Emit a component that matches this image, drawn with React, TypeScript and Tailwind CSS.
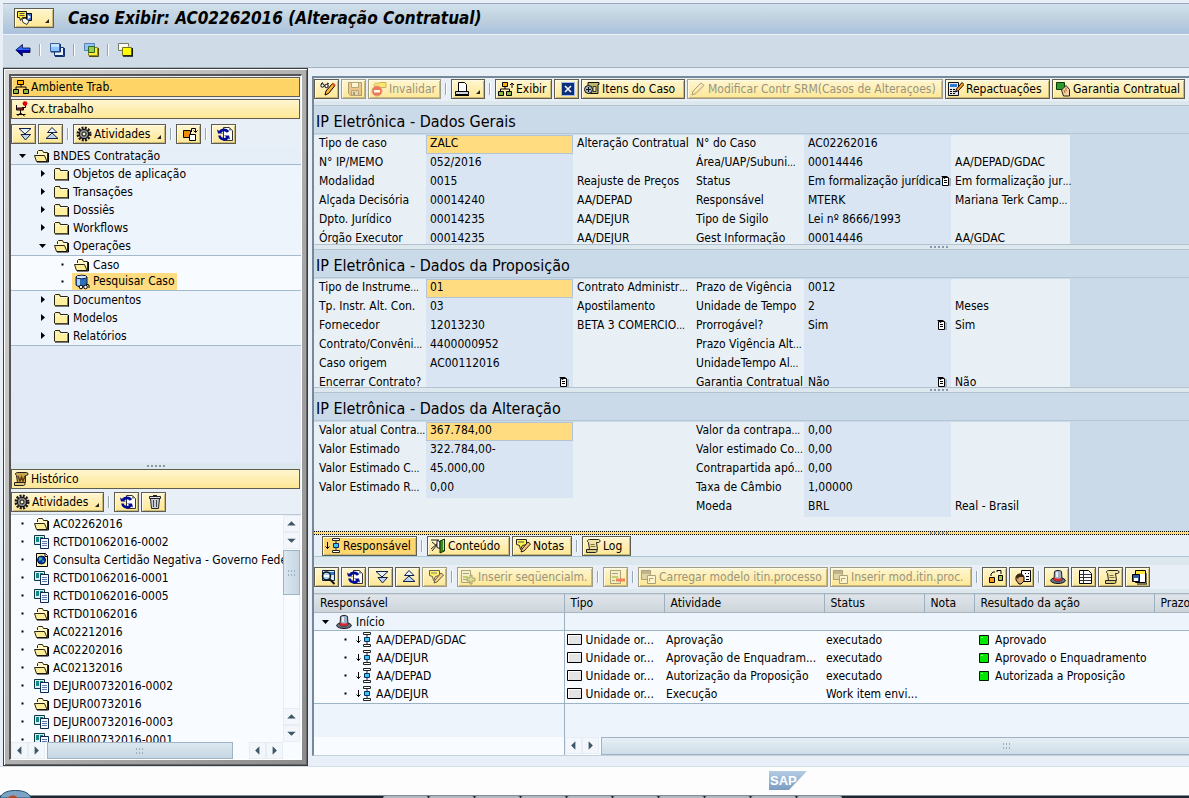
import { ReactNode } from 'react';
import clsx from 'clsx';

const icons: Record<string, ReactNode> = {
  back: (
    <>
      <path d="M1 8L7 2.500V6h8v2z" fill="#2a6cff" />
      <path d="M1 8h14v2.500H7V14z" fill="#0000a8" />
      <path d="M.8 8L7.500 2.500V6H15v4.500H7.500V14z" stroke="#00003c" strokeWidth=".8" />
    </>
  ),
  newWindow: (
    <>
      <path d="M5.500 5.500h9v8h-9z" fill="#e8f0fa" stroke="#14306e" />
      <path d="M6 14.500h9.500V6" stroke="#14306e" />
      <path d="M1.500 1.500h9v8h-9z" fill="#8cc4ff" stroke="#3a5f9c" />
      <path d="M2 2h8v3H2z" fill="#c4e2ff" />
      <path d="M2 10h9.500V2" stroke="#14306e" />
    </>
  ),
  overlapGreen: (
    <>
      <path d="M1.500 1.500h10v7h-10z" fill="#8cc4ff" stroke="#5b7fae" />
      <path d="M5.500 5.500h9v8h-9z" fill="#ffee3c" stroke="#8a8530" />
      <path d="M6 14.500h9.500V6" stroke="#4d4a12" />
      <path d="M5.500 4.500h6v6h-6z" fill="#9ad04a" stroke="#33651b" />
    </>
  ),
  overlapYellow: (
    <>
      <path d="M1.500 8.500v-7h10v3" fill="#fbfbf0" stroke="#77786a" />
      <path d="M1.500 8.500h4" stroke="#77786a" />
      <path d="M5.500 5.500h9v8h-9z" fill="#ffff00" stroke="#77731a" />
      <path d="M6 14h9.500V6" stroke="#111" strokeWidth="1.400" />
    </>
  ),
  session: (
    <>
      <path d="M.5 1.500h9v6h-4l-2 3-1-3h-2z" fill="#ffe83c" stroke="#222" />
      <path d="M2.500 3.500h5M2.500 5.500h5" stroke="#555" />
      <path d="M9.500 3.500h5v7h-5z" fill="#2f6fd0" stroke="#000" />
      <path d="M11 5l3 2-3 2z" fill="#fff" />
      <path d="M5 9l3-1 4 3-2 3.500-4-2z" fill="#fff" stroke="#333" />
    </>
  ),
  org: (
    <>
      <path d="M8 5v3M3 11V8h10v3" stroke="#000" />
      <path d="M4.500 1.500h6v4h-6z" fill="#ffae00" stroke="#000" />
      <path d="M.5 10.500h5v4h-5zM10.500 10.500h5v4h-5z" fill="#8bb83d" stroke="#000" />
    </>
  ),
  chair: (
    <>
      <path d="M3.500 4v5h7v-2h-6" fill="#d8282c" stroke="#000" />
      <path d="M7.500 9v4M3.500 13.500h9M4.500 15l3-3 4 3" stroke="#000" />
      <path d="M9 6.500h3.500V4" stroke="#000" />
      <circle cx="12" cy="2.600" r="2.400" fill="#e00000" />
    </>
  ),
  down2: (
    <>
      <path d="M2 2.500h12L8 8z" fill="#e9f1fb" stroke="#10204a" />
      <path d="M4 8.500h9.500L8.500 14z" fill="#bcd4ee" stroke="#10204a" />
    </>
  ),
  up2: (
    <>
      <path d="M8 1.500l5 5H3.500z" fill="#e9f1fb" stroke="#10204a" />
      <path d="M8 7l6 5.500H2z" fill="#bcd4ee" stroke="#10204a" />
    </>
  ),
  gear: (
    <>
      <circle cx="8" cy="8" r="6.200" stroke="#1c1c1c" strokeWidth="2.600" strokeDasharray="2 1.250" />
      <circle cx="8" cy="8" r="4.700" fill="#8c8c8c" stroke="#111" strokeWidth="1.200" />
      <circle cx="8" cy="8" r="2" fill="#fff6cc" stroke="#111" />
    </>
  ),
  swap: (
    <>
      <path d="M1.500 4.500h7v7h-7z" fill="#f08a00" stroke="#000" />
      <path d="M7.500 8.500h6v6h-6z" fill="#fff" stroke="#000" />
      <path d="M9.500 6V2.500h4V6M11.500 4.500l2 2 2-2" stroke="#000" />
    </>
  ),
  refresh: (
    <>
      <path d="M6.500 1.500h6l3 3v10h-9z" fill="#fff" stroke="#333" />
      <path d="M12 1l3.500 3.500H12z" fill="#888" />
      <path d="M11 6A4.500 4 0 0 0 3 6M2.500 9.500a4.500 4 0 0 0 8.500 1.500" stroke="#000b96" strokeWidth="2.600" />
      <path d="M0 3.500l6 4H1zM13 13.500l-6-4h5z" fill="#000b96" />
    </>
  ),
  trash: (
    <>
      <path d="M3.500 4.500h9l-1 10h-7z" fill="#c9cfd6" stroke="#222" />
      <path d="M6.500 6v7M9.500 6v7" stroke="#444" />
      <path d="M2.500 2.500h11v2h-11z" fill="#e6eaee" stroke="#222" />
      <path d="M6 1.500h4" stroke="#222" />
    </>
  ),
  folder: (
    <>
      <path d="M.5 13.500v-10l1-1h4l1 2h7v9z" fill="#fff0a0" stroke="#8a8052" />
      <path d="M.5 13V3.500l1-1h4l1 2h7" stroke="#2a2611" />
      <path d="M1.500 5.500h12" stroke="#fffbe0" />
      <path d="M14.500 5v9.500M1 14h14" stroke="#000" />
    </>
  ),
  openFolder: (
    <>
      <path d="M3.500 6V3.500l1-1h4l1 2h4v9" fill="#fff7c4" stroke="#2a2611" />
      <path d="M.5 7.500h10l2.500 6H2.500z" fill="#ffee98" stroke="#2a2611" />
      <path d="M14.500 5v9H3" stroke="#000" />
    </>
  ),
  search: (
    <>
      <path d="M2 3v8c2 2.500 9 2.500 11 0V3" fill="#2f6fb8" stroke="#10204a" />
      <path d="M3 4v7l3 1V4z" fill="#a8d4ff" />
      <ellipse cx="7.500" cy="3" rx="5.500" ry="1.800" fill="#cfe6fb" stroke="#10204a" />
      <circle cx="7" cy="13" r="1.800" fill="#fff" stroke="#000" />
      <circle cx="11.500" cy="13" r="1.800" fill="#fff" stroke="#000" />
      <path d="M12 10l3 1v3" stroke="#000" />
    </>
  ),
  docs: (
    <>
      <path d="M.5 1.500h10v9H.5z" fill="#d5f0ee" stroke="#0c3640" />
      <path d="M2 3h3v5H2zM6 3h3v2H6z" fill="#138a8a" />
      <path d="M6.500 4.500h8v10h-8z" fill="#f4f8ff" stroke="#0e2752" />
      <path d="M8 7.500h5M8 9.500h5M8 11.500h5" stroke="#5878a8" />
    </>
  ),
  web: (
    <>
      <path d="M2.500 1.500h9l2 2v11h-11z" fill="#fff3b0" stroke="#000" />
      <path d="M11 1.500v3h3" fill="#fff" stroke="#000" />
      <circle cx="7.500" cy="8" r="4" fill="#0b2fae" stroke="#001040" />
      <path d="M5.500 5l3 1-1 2-3 1zM8.500 8l2 1-2 2z" fill="#33c7a0" />
    </>
  ),
  scroll: (
    <>
      <path d="M3.500 4.500c-2-1-1-3 1-3h9c2 0 2 3 0 3h-2l1 7h-8z" fill="#f1e4a4" stroke="#222" />
      <path d="M1.500 11.500h9c2 0 2 3 0 3h-9z" fill="#dccb7d" stroke="#222" />
      <path d="M5.500 6.500h4M5.500 8.500h5" stroke="#7d7136" />
    </>
  ),
  history: (
    <>
      <path d="M3.500 4.500c-2-1-1-3 1-3h9c2 0 2 3 0 3h-1v7h-8z" fill="#c9a44c" stroke="#222" />
      <path d="M1.500 11.500h9c2 0 2 3 0 3h-9z" fill="#e2c878" stroke="#222" />
      <path d="M5 5l2 5 1.500-4L10 10l2-5" stroke="#5b3b12" strokeWidth="1.400" />
    </>
  ),
  pencilGlasses: (
    <>
      <path d="M1 3l2-1.500M7 2l2 1" stroke="#000" />
      <circle cx="2.500" cy="4.500" r="1.700" fill="#fff" stroke="#000" />
      <circle cx="6.500" cy="5" r="1.700" fill="#fff" stroke="#000" />
      <path d="M5 14l1-4 6.500-7.500 2.500 2L8.500 12.500z" fill="#ffb733" stroke="#000" />
      <path d="M11.500 3.500l2.500 2 1.500-2L13 1.500z" fill="#e35b20" />
    </>
  ),
  save: (
    <>
      <path d="M1.500 1.500h13v13h-11l-2-2z" fill="#e8b574" stroke="#8a7a5c" />
      <path d="M4.500 1.500h7v5h-7z" fill="#fff4d5" stroke="#9a8562" />
      <path d="M4.500 9.500h7v5h-7z" fill="#d9cdb0" stroke="#9a8562" />
      <path d="M6 11h2v3H6z" fill="#8a7a5c" />
    </>
  ),
  invalidate: (
    <>
      <path d="M3 3.500c2-3 4 0 6-2h6v5H4z" fill="#ffe14a" stroke="#b59a3a" />
      <circle cx="6" cy="10" r="5" fill="#e8462f" stroke="#c98377" />
      <path d="M3 9h6v2.500H3z" fill="#fff" />
    </>
  ),
  print: (
    <>
      <path d="M4.500 1.500h6l2 2v7h-8z" fill="#fff" stroke="#000" />
      <path d="M1.500 10.500h13v3h-13z" fill="#cfd6de" stroke="#000" />
      <path d="M1 14h14v1H1z" fill="#000" />
    </>
  ),
  close: (
    <>
      <path d="M1 1h14v14H1z" fill="#a6b8ea" />
      <path d="M2 2h12v12H2z" fill="#0c2f7c" />
      <path d="M5 5l6 6M11 5l-6 6" stroke="#fff" strokeWidth="1.500" />
    </>
  ),
  orgUp: (
    <>
      <path d="M7 6v2M2.500 10V8h9v2M14 7V2M12 4l2-2 2 2" stroke="#000" />
      <path d="M4.500 1.500h5v4h-5z" fill="#ffae00" stroke="#000" />
      <path d="M.5 10.500h5v4h-5zM8.500 10.500h5v4h-5z" fill="#8bb83d" stroke="#000" />
    </>
  ),
  items: (
    <>
      <path d="M4 1.500h11v2h-1v9H4z" fill="#bdb76a" stroke="#111" />
      <path d="M9 5.500h3v5H9z" fill="#ece7a8" stroke="#333" />
      <circle cx="4.500" cy="8.500" r="4" fill="#9fb1c4" stroke="#111" />
      <path d="M2 8.500h5M4.500 6v5" stroke="#111" />
    </>
  ),
  pencil: (
    <>
      <path d="M2 14l1-4 8-8 3 2.500-8 8z" fill="#f3dca0" stroke="#8d8468" />
      <path d="M5 10l7-7" stroke="#fffbe8" />
    </>
  ),
  calc: (
    <>
      <path d="M.5 1.500h10v13H.5z" fill="#e6e6e6" stroke="#111" />
      <path d="M2 3h7v3H2z" fill="#2a7bd6" />
      <path d="M2 8h2v1H2zM5 8h2v1H5zM2 10h2v1H2zM5 10h2v1H5zM2 12h2v1H2zM5 12h2v1H5z" fill="#000" />
      <path d="M7.500 11l1-3 5.500-6.500 2 2-5.500 6z" fill="#ff9a1f" stroke="#111" />
    </>
  ),
  hand: (
    <>
      <path d="M1.500 1.500h8v7h-8z" fill="#2c9a2c" stroke="#0a3c0a" />
      <path d="M6.500 9L11 4.500l3.500 4v6.500h-6z" fill="#f6cfa2" stroke="#222" />
      <path d="M11 6.500v4M9 9l1 3" stroke="#a87443" />
    </>
  ),
  agent: (
    <>
      <path d="M2.500 4v7M.5 8.500l2 2 2-2" stroke="#000" />
      <path d="M7.500.5h7v2h-7zM7.500 12.500h7v2h-7z" fill="#fff" stroke="#222" />
      <path d="M11 3v9" stroke="#222" />
      <path d="M8.500 5.500h5v4h-5z" fill="#35c8f0" stroke="#0a2c66" />
    </>
  ),
  content: (
    <>
      <path d="M1 2h8M2 13l5-6M2 4l6 5M1 11l7-6" stroke="#222" />
      <path d="M7 2.500l3 1v7l-3-1z" fill="#fff" stroke="#222" />
      <path d="M10 3l4.500-2v12L10 15z" fill="#3a8c1e" stroke="#102e08" />
      <path d="M13.500 2v10" stroke="#e0d65a" />
    </>
  ),
  note: (
    <>
      <path d="M1.500 1.500h10v5l-4 1-2 4-1-4-3-1z" fill="#fff04a" stroke="#222" />
      <path d="M3 4h6" stroke="#555" />
      <path d="M6 14l1-3 6-7 2.500 2-6.500 7z" fill="#ffc37a" stroke="#222" />
    </>
  ),
  find: (
    <>
      <path d="M2.500 1.500h12v10h-12z" fill="#d8ecfb" stroke="#123" />
      <path d="M3 3h11v3H3z" fill="#2a7bd6" />
      <circle cx="6.500" cy="7" r="4" fill="#9fd0f8" stroke="#111" strokeWidth="1.500" />
      <path d="M9.500 10l5 5" stroke="#111" strokeWidth="2" />
      <path d="M4 7h5" stroke="#fff" strokeWidth="2" />
    </>
  ),
  insert: (
    <>
      <path d="M1.500 1.500h9v12h-9z" fill="#f3eecb" stroke="#878263" />
      <path d="M3 4.500h6M3 10.500h4" stroke="#878263" />
      <path d="M3 7h5v2H3z" fill="#a8c34c" />
      <path d="M10 6h2v3h3v3h-3v3h-2v-3H7V9h3z" fill="#cfe07c" stroke="#878263" />
    </>
  ),
  remove: (
    <>
      <path d="M1.500 1.500h10v13h-10z" fill="#f3eecb" stroke="#878263" />
      <path d="M3 4.500h6M3 11.500h3" stroke="#878263" />
      <path d="M3 7h6v2H3z" fill="#a8c34c" />
      <path d="M7 9.500h9v3H7z" fill="#ef5638" />
    </>
  ),
  template: (
    <>
      <path d="M.5 1.500h9v9h-9z" fill="#d3ca9c" stroke="#878263" />
      <path d="M1 2h8v3H1z" fill="#a59c72" />
      <path d="M6.500 6.500h8v8h-8z" fill="#fff8db" stroke="#878263" />
      <path d="M8.500 12.500v-3h4" stroke="#878263" />
    </>
  ),
  link: (
    <>
      <path d="M3 7V5l2-2h2M9 3V1.500h4V5" stroke="#000" />
      <path d="M1.500 8.500h5v5h-5z" fill="#ff9a1f" stroke="#000" />
      <path d="M10.500 6.500h4v5h-4z" fill="#a5c64b" stroke="#000" />
    </>
  ),
  people: (
    <>
      <path d="M6.500 1.500h9v11h-9z" fill="#fff" stroke="#000" />
      <path d="M10 4h1v1h-1zM13 4h1v1h-1zM11 7h3v1h-3zM11 10h3v1h-3z" fill="#000" />
      <path d="M1 8c1-4 7-4 8 0v4l-3 3H4l-3-4z" fill="#e0a868" stroke="#000" />
      <path d="M1 8c1-4 7-4 8 0H4l-1 2z" fill="#3a2410" />
    </>
  ),
  hat: (
    <>
      <ellipse cx="8" cy="11.500" rx="7.300" ry="3" fill="#65728a" stroke="#111" />
      <path d="M4 11l.5-8.500c2-1.500 5-1.500 7 0L12 11c-2 1.500-6 1.500-8 0z" fill="#9fb0c8" stroke="#222" />
      <path d="M6 3v5h2V3z" fill="#e8eef7" />
      <path d="M4 8.500c2 1.500 6 1.500 8 0V11c-2 1.500-6 1.500-8 0z" fill="#d8282c" />
    </>
  ),
  table: (
    <>
      <path d="M2.500 1.500h9l3 3v10h-12z" fill="#fff" stroke="#000" />
      <path d="M6.500 2v12M3 5.500h11M3 8.500h11M3 11.500h11" stroke="#333" />
    </>
  ),
  windowSave: (
    <>
      <path d="M4.500 1.500h10v12h-10z" fill="#fff" stroke="#000" />
      <path d="M5 2h9v3H5z" fill="#ffe83c" />
      <path d="M1.500 5.500h7v7h-7z" fill="#2a5aa8" stroke="#000" />
      <path d="M3 9h4v3H3z" fill="#fff" />
      <path d="M6 15h10V4" stroke="#000" />
    </>
  ),
  grayBox: (
    <>
      <path d="M.5 2.500h14v10H.5z" fill="#e4e4e4" stroke="#000" />
      <path d="M1.500 11.500v-8h12" stroke="#fff" />
    </>
  ),
  greenBox: (
    <>
      <path d="M2.500 3.500h9v9h-9z" fill="#00e800" stroke="#001c00" />
      <path d="M4 5h2v1H4z" fill="#b0ffb0" />
    </>
  ),
};

function Icon({ name, className }: { name: string; className?: string }) {
  return (
    <svg viewBox="0 0 16 16" className={clsx('h-4 w-4 shrink-0', className)} fill="none" aria-hidden="true">
      {icons[name]}
    </svg>
  );
}

interface ToolButtonProps {
  icon: string;
  text?: string;
  title?: string;
  width?: string;
  menu?: boolean;
  disabled?: boolean;
  active?: boolean;
}

function ToolButton({ icon, text, title, width = 'w-[25px]', menu, disabled, active }: ToolButtonProps) {
  return (
    <button
      disabled={disabled}
      aria-label={text ?? title}
      className={clsx(
        'flex h-5 shrink-0 items-center gap-0.5 border pl-0.5 whitespace-nowrap shadow-[inset_1px_1px_0_#fffbe6,inset_-1px_-1px_0_#c9b878]',
        width,
        active ? 'bg-[#fdd670]' : 'bg-linear-to-b from-[#fff6d0] to-[#fee794]',
        disabled ? 'border-[#a29d86] text-[#98947f]' : 'border-[#5f5d50] text-black',
        !text && !menu && 'justify-center pl-0'
      )}
    >
      <Icon name={icon} className={disabled ? 'opacity-70' : ''} />
      {text && <span>{text}</span>}
      {menu && (
        <svg viewBox="0 0 4 4" className="mr-1 mb-1 ml-auto h-1 w-1 self-end" aria-hidden="true">
          <path d="M4 0v4H0z" fill="#222" />
        </svg>
      )}
    </button>
  );
}

function Sep() {
  return <span className="mx-0.5 h-3 w-0.5 shrink-0 border-l border-[#98a4ae] bg-white" />;
}

// Dotted handle in the middle of a splitter bar
function Grip() {
  return (
    <svg viewBox="0 0 19 3" className="h-[3px] w-[19px] shrink-0" aria-hidden="true">
      <path d="M0 0h2v2H0zM4 0h2v2H4zM8 0h2v2H8zM12 0h2v2h-2zM16 0h2v2h-2z" fill="#8699ad" />
    </svg>
  );
}

function Arrow({ dir }: { dir: 'up' | 'down' | 'left' | 'right' }) {
  const paths = {
    up: 'M3.500 10l4.500-4.500 4.500 4.500z',
    down: 'M3.500 6L8 10.500 12.500 6z',
    left: 'M10 3.500L5.500 8l4.500 4.500z',
    right: 'M6 3.500L10.500 8 6 12.500z',
  };
  return (
    <button aria-label={`Rolar ${dir}`} className="h-[17px] w-[17px] shrink-0 border border-[#e6edf4] bg-[#f3f7fb]">
      <svg viewBox="0 0 16 16" className="h-[15px] w-[15px]" aria-hidden="true">
        <path d={paths[dir]} fill="#3f5666" />
      </svg>
    </button>
  );
}

function ThumbDots() {
  return (
    <svg viewBox="0 0 8 6" className="h-1.5 w-2" aria-hidden="true">
      <path d="M0 0h1v2H0zM3 0h1v2H3zM6 0h1v2H6zM0 4h1v2H0zM3 4h1v2H3zM6 4h1v2H6z" fill="#9aafc0" />
    </svg>
  );
}

function Marker({ kind }: { kind: 'open' | 'closed' | 'leaf' }) {
  const paths = { open: 'M1 3h7L4.500 7z', closed: 'M3 1l4 3.500L3 8z', leaf: 'M3.500 3.500h2v2h-2z' };
  return (
    <svg viewBox="0 0 10 10" className="h-2.5 w-2.5 shrink-0" aria-hidden="true">
      <path d={paths[kind]} fill="#000" />
    </svg>
  );
}

const tree = [
  { text: 'Objetos de aplicação' },
  { text: 'Transações' },
  { text: 'Dossiês' },
  { text: 'Workflows' },
  { text: 'Operações', open: true },
];

const treeEnd = ['Documentos', 'Modelos', 'Relatórios'];

const history = [
  { icon: 'openFolder', text: 'AC02262016' },
  { icon: 'docs', text: 'RCTD01062016-0002' },
  { icon: 'web', text: 'Consulta Certidão Negativa - Governo Federal' },
  { icon: 'docs', text: 'RCTD01062016-0001' },
  { icon: 'docs', text: 'RCTD01062016-0005' },
  { icon: 'openFolder', text: 'RCTD01062016' },
  { icon: 'openFolder', text: 'AC02212016' },
  { icon: 'openFolder', text: 'AC02202016' },
  { icon: 'openFolder', text: 'AC02132016' },
  { icon: 'docs', text: 'DEJUR00732016-0002' },
  { icon: 'openFolder', text: 'DEJUR00732016' },
  { icon: 'docs', text: 'DEJUR00732016-0003' },
  { icon: 'docs', text: 'DEJUR00732016-0001' },
];

function TreeRow({ text, open }: { text: string; open?: boolean }) {
  return (
    <li className="flex h-[18px] items-center bg-[#edf4fc] pl-[27px]">
      <Marker kind={open ? 'open' : 'closed'} />
      <Icon name={open ? 'openFolder' : 'folder'} className="ml-1.5" />
      <span className="pl-[3px]">{text}</span>
    </li>
  );
}

function Sidebar() {
  return (
    <aside className="ml-[3px] flex w-[305px] shrink-0 flex-col border border-[#3c3c3c] bg-linear-to-br from-[#d8d8d8] to-[#8c8c8c] p-[5px] shadow-[inset_1px_1px_0_#fff,inset_-1px_-1px_0_#666]">
      <div className="flex flex-1 flex-col border-t-2 border-r border-b border-l-2 border-t-[#555] border-r-white border-b-white border-l-[#555] bg-[#e8eff6]">
        <div className="flex flex-col gap-0.5 pt-px pr-px">
          <button className="flex h-5 items-center gap-0.5 border border-[#5f5d50] bg-[#fdd465] pl-px shadow-[inset_1px_1px_0_#ffe7a0]">
            <Icon name="org" />
            Ambiente Trab.
          </button>
          <button className="flex h-5 items-center gap-0.5 border border-[#5f5d50] bg-linear-to-b from-[#fff6d0] to-[#fee794] pl-px">
            <Icon name="chair" />
            Cx.trabalho
          </button>
        </div>
        <div className="flex items-center gap-0.5 pt-[5px] pb-[3px]">
          <ToolButton icon="down2" title="Expandir" />
          <ToolButton icon="up2" title="Comprimir" />
          <Sep />
          <ToolButton icon="gear" text="Atividades" width="w-[93px]" menu />
          <Sep />
          <ToolButton icon="swap" title="Trocar" />
          <Sep />
          <ToolButton icon="refresh" title="Atualizar" />
        </div>
        <div className="flex-1 bg-[#e1eaf6]">
          <div className="flex h-[18px] items-center border-b border-[#a3b9cc] bg-[#e6eff8] pl-[7px]">
            <Marker kind="open" />
            <Icon name="openFolder" className="ml-1.5" />
            <span className="pl-[3px]">BNDES Contratação</span>
          </div>
          <ul>
            {tree.map((row) => (
              <TreeRow key={row.text} {...row} />
            ))}
          </ul>
          <ul className="border-y border-[#a3b9cc] bg-[#f8fbff]">
            <li className="flex h-[17px] items-center pl-[47px]">
              <Marker kind="leaf" />
              <Icon name="openFolder" className="ml-1.5" />
              <span className="pl-[3px]">Caso</span>
            </li>
            <li className="flex h-[17px] items-center pl-[47px]">
              <Marker kind="leaf" />
              <span className="ml-1 flex items-center bg-[#ffdc80] px-0.5">
                <Icon name="search" />
                <span className="pl-[3px] leading-[17px]">Pesquisar Caso</span>
              </span>
            </li>
          </ul>
          <ul className="border-b border-[#a3b9cc]">
            {treeEnd.map((text) => (
              <TreeRow key={text} text={text} />
            ))}
          </ul>
        </div>
        <div className="flex h-[6px] items-center justify-center bg-[#dde7ee]">
          <Grip />
        </div>
        <button className="mr-px flex h-5 items-center gap-0.5 border border-[#5f5d50] bg-linear-to-b from-[#fff6d0] to-[#fee794] pl-px">
          <Icon name="history" />
          Histórico
        </button>
        <div className="flex items-center gap-0.5 border-b border-[#b8c8d6] pt-[3px] pb-0.5">
          <ToolButton icon="gear" text="Atividades" width="w-[93px]" menu />
          <Sep />
          <ToolButton icon="refresh" title="Atualizar" />
          <ToolButton icon="trash" title="Eliminar" />
        </div>
        <div className="flex h-[227px] bg-[#f8fbff]">
          <ul className="flex-1 overflow-hidden">
            {history.map((row) => (
              <li key={row.text} className="flex h-[18px] items-center pl-[7px] whitespace-nowrap">
                <Marker kind="leaf" />
                <Icon name={row.icon} className="ml-1.5" />
                <span className="pl-[3px]">{row.text}</span>
              </li>
            ))}
          </ul>
          <div className="mr-px flex w-[17px] flex-col">
            <Arrow dir="up" />
            <Arrow dir="down" />
            <div className="mt-px flex h-[45px] items-center justify-center border border-[#9fb3c4] bg-linear-to-r from-[#dde8f0] to-[#c6d6e2]">
              <ThumbDots />
            </div>
            <div className="flex-1 border-x border-[#e6edf4]" />
            <Arrow dir="up" />
            <Arrow dir="down" />
          </div>
        </div>
        <div className="flex h-[17px] bg-[#f8fbff]">
          <Arrow dir="left" />
          <Arrow dir="right" />
          <div className="ml-0.5 flex w-[186px] items-center justify-center border border-[#9fb3c4] bg-linear-to-b from-[#dde8f0] to-[#c6d6e2]">
            <ThumbDots />
          </div>
          <div className="flex-1" />
          <Arrow dir="left" />
          <Arrow dir="right" />
          <div className="w-[18px]" />
        </div>
      </div>
    </aside>
  );
}

interface Field {
  // label, value and description, twice over
  cells: string[];
  // which value cells have an input help mark
  pick?: 'right' | 'both';
}

const general: Field[] = [
  { cells: ['Tipo de caso', 'ZALC', 'Alteração Contratual', 'N° do Caso', 'AC02262016', ''] },
  { cells: ['N° IP/MEMO', '052/2016', '', 'Área/UAP/Subuni...', '00014446', 'AA/DEPAD/GDAC'] },
  { cells: ['Modalidad', '0015', 'Reajuste de Preços', 'Status', 'Em formalização jurídica', 'Em formalização jur...'], pick: 'right' },
  { cells: ['Alçada Decisória', '00014240', 'AA/DEPAD', 'Responsável', 'MTERK', 'Mariana Terk Camp...'] },
  { cells: ['Dpto. Jurídico', '00014235', 'AA/DEJUR', 'Tipo de Sigilo', 'Lei nº 8666/1993', ''] },
  { cells: ['Órgão Executor', '00014235', 'AA/DEJUR', 'Gest Informação', '00014446', 'AA/GDAC'] },
];

const proposal: Field[] = [
  { cells: ['Tipo de Instrume...', '01', 'Contrato Administr...', 'Prazo de Vigência', '0012', ''] },
  { cells: ['Tp. Instr. Alt. Con.', '03', 'Apostilamento', 'Unidade de Tempo', '2', 'Meses'] },
  { cells: ['Fornecedor', '12013230', 'BETA 3 COMERCIO...', 'Prorrogável?', 'Sim', 'Sim'], pick: 'right' },
  { cells: ['Contrato/Convêni...', '4400000952', '', 'Prazo Vigência Alt...', '', ''] },
  { cells: ['Caso origem', 'AC00112016', '', 'UnidadeTempo Al...', '', ''] },
  { cells: ['Encerrar Contrato?', '', '', 'Garantia Contratual', 'Não', 'Não'], pick: 'both' },
];

const change: Field[] = [
  { cells: ['Valor atual Contra...', '367.784,00', '', 'Valor da contrapa...', '0,00', ''] },
  { cells: ['Valor Estimado', '322.784,00-', '', 'Valor estimado Co...', '0,00', ''] },
  { cells: ['Valor Estimado C...', '45.000,00', '', 'Contrapartida apó...', '0,00', ''] },
  { cells: ['Valor Estimado R...', '0,00', '', 'Taxa de Câmbio', '1,00000', ''] },
  { cells: ['', '', '', 'Moeda', 'BRL', 'Real - Brasil'] },
];

function PickMark() {
  return (
    <svg viewBox="0 0 10 10" className="h-2.5 w-2.5 shrink-0" fill="none" aria-hidden="true">
      <path d="M1.500 1.500h6v8h-6z" fill="#fff" stroke="#000" />
      <path d="M0 0h7L3.500 3z" fill="#000" />
      <path d="M3 4.500h3M3 6.500h3" stroke="#000" />
      <path d="M9 2v8" stroke="#66809a" />
    </svg>
  );
}

// Cut-off texts end in small dots
function CutText({ text }: { text: string }) {
  if (!text.endsWith('...')) return <>{text}</>;
  return (
    <>
      {text.slice(0, -3)}
      <span className="text-[10px]">...</span>
    </>
  );
}

function ValueCell({ value, pick, selected, blank }: { value: string; pick: boolean; selected: boolean; blank: boolean }) {
  return (
    <td
      className={clsx(
        'p-0',
        selected ? 'bg-[#ffdc80] outline outline-[#b4c3d6] -outline-offset-1' : !blank && 'bg-[#d9e5f3]'
      )}
    >
      <div className="flex h-4 items-center justify-between px-1 whitespace-nowrap">
        <span>{value}</span>
        {pick && <PickMark />}
      </div>
    </td>
  );
}

function Section({ title, fields, height }: { title: string; fields: Field[]; height: string }) {
  return (
    <section>
      <h2 className="flex h-7 items-center border-b border-[#b4c6d6] bg-[#cbdae9] pt-1 pl-0.5 text-base">{title}</h2>
      <div className={clsx('overflow-hidden bg-[#cbdae9] pt-px', height)}>
        <div className="h-full w-[756px] bg-[#e8f0f6]">
          <table className="w-full table-fixed border-collapse">
            <colgroup>
              <col className="w-[112px]" />
              <col className="w-[147px]" />
              <col className="w-[119px]" />
              <col className="w-[112px]" />
              <col className="w-[147px]" />
              <col className="w-[119px]" />
            </colgroup>
            <tbody>
              {fields.map(({ cells, pick }, i) => (
                <tr key={cells[3]} className="h-[19px] align-top leading-4 whitespace-nowrap">
                  <th scope="row" className="p-0 pl-[5px] text-left font-normal">
                    <CutText text={cells[0]} />
                  </th>
                  <ValueCell value={cells[1]} pick={pick === 'both'} selected={i === 0} blank={!cells[0]} />
                  <td className="p-0 pl-1">
                    <CutText text={cells[2]} />
                  </td>
                  <th scope="row" className="p-0 pl-1 text-left font-normal">
                    <CutText text={cells[3]} />
                  </th>
                  <ValueCell value={cells[4]} pick={!!pick} selected={false} blank={false} />
                  <td className="p-0 pl-1">
                    <CutText text={cells[5]} />
                  </td>
                </tr>
              ))}
            </tbody>
          </table>
        </div>
      </div>
    </section>
  );
}

function Splitter() {
  return (
    <div className="flex h-[6px] items-center border-y border-[#b4c2cf] bg-[#dde7ee] pl-[616px]">
      <Grip />
    </div>
  );
}

const steps = [
  ['AA/DEPAD/GDAC', 'Aprovação', 'executado', 'Aprovado'],
  ['AA/DEJUR', 'Aprovação de Enquadram...', 'executado', 'Aprovado o Enquadramento'],
  ['AA/DEPAD', 'Autorização da Proposição', 'executado', 'Autorizada a Proposição'],
  ['AA/DEJUR', 'Execução', 'Work item envi...', ''],
];

function StepsTable() {
  const th = 'border-r border-[#9db0c0] p-0 pl-1.5 text-left font-normal';
  return (
    <table className="w-[1070px] table-fixed border-collapse whitespace-nowrap">
      <colgroup>
        <col className="w-[250px]" />
        <col className="w-[100px]" />
        <col className="w-[160px]" />
        <col className="w-[100px]" />
        <col className="w-[50px]" />
        <col className="w-[180px]" />
        <col />
      </colgroup>
      <thead>
        <tr className="h-[19px] border-y border-[#a9b6c2] bg-linear-to-b from-[#dfe5ea] to-[#cdd4da]">
          <th className={th}>Responsável</th>
          <th className={th}>Tipo</th>
          <th className={th}>Atividade</th>
          <th className={th}>Status</th>
          <th className={th}>Nota</th>
          <th className={th}>Resultado da ação</th>
          <th className={th}>Prazo</th>
        </tr>
      </thead>
      <tbody>
        <tr className="h-[18px] border-b border-[#9db3c6] bg-[#edf4fc]">
          <td className="border-r border-[#9db0c0] p-0 pl-[7px]">
            <div className="flex items-center">
              <Marker kind="open" />
              <Icon name="hat" className="ml-[5px]" />
              <span className="pl-1 leading-4">Início</span>
            </div>
          </td>
          <td colSpan={6} />
        </tr>
        {steps.map(([who, activity, status, result], i) => (
          <tr key={i} className={clsx('h-[18px] bg-[#f8fbff] leading-[18px]', i === 3 && 'border-b border-[#9db3c6]')}>
            <td className="border-r border-[#9db0c0] p-0 pl-[27px]">
              <div className="flex items-center">
                <Marker kind="leaf" />
                <Icon name="agent" className="ml-[5px]" />
                <span className="pl-1">{who}</span>
              </div>
            </td>
            <td className="p-0 pl-0.5">
              <div className="flex items-center gap-[3px]">
                <Icon name="grayBox" />
                Unidade or...
              </div>
            </td>
            <td className="p-0 pl-0.5">{activity}</td>
            <td className="p-0 pl-0.5">{status}</td>
            <td className="p-0" />
            <td className="p-0 pl-[3px]">
              {result && (
                <div className="flex items-center gap-0.5">
                  <Icon name="greenBox" />
                  {result}
                </div>
              )}
            </td>
            <td className="p-0" />
          </tr>
        ))}
      </tbody>
    </table>
  );
}

function CasePanel() {
  return (
    <main className="mt-2 mb-[10px] ml-1 flex min-w-0 flex-1 flex-col overflow-hidden border-t-2 border-b border-l-2 border-[#75899a] border-b-[#c4d0da]">
      <div className="flex items-center gap-0.5 py-px">
        <ToolButton icon="pencilGlasses" title="Exibir/Modificar" />
        <ToolButton icon="save" title="Gravar" disabled />
        <ToolButton icon="invalidate" text="Invalidar" width="w-[73px]" disabled />
        <Sep />
        <ToolButton icon="print" title="Imprimir" width="w-[34px]" menu />
        <Sep />
        <ToolButton icon="orgUp" text="Exibir" width="w-[57px]" />
        <ToolButton icon="close" title="Fechar" />
        <ToolButton icon="items" text="Itens do Caso" width="w-[104px]" />
        <ToolButton icon="pencil" text="Modificar Contr SRM(Casos de Alteraçoes)" width="w-[256px]" disabled />
        <ToolButton icon="calc" text="Repactuações" width="w-[105px]" />
        <ToolButton icon="hand" text="Garantia Contratual" width="w-[133px]" />
      </div>
      <div className="mt-px h-[5px] border-b border-[#b4c2cf] bg-[#dde7ee]" />
      <Section title="IP Eletrônica - Dados Gerais" fields={general} height="h-[110px]" />
      <Splitter />
      <Section title="IP Eletrônica - Dados da Proposição" fields={proposal} height="h-[109px]" />
      <Splitter />
      <Section title="IP Eletrônica - Dados da Alteração" fields={change} height="h-[110px]" />
      <div className="flex h-1 items-center border-y border-dotted border-black bg-[#ffdc80] pl-[616px]">
        <Grip />
      </div>
      <nav className="flex items-center gap-0.5 border-b border-[#a9c8d8] pt-px pl-2">
        <ToolButton icon="agent" text="Responsável" width="w-[95px]" active />
        <Sep />
        <ToolButton icon="content" text="Conteúdo" width="w-[83px]" />
        <ToolButton icon="note" text="Notas" width="w-[60px]" />
        <Sep />
        <ToolButton icon="scroll" text="Log" width="w-[49px]" />
      </nav>
      <div className="h-2 bg-[#dde7ee]" />
      <div className="flex items-center gap-0.5 py-0.5">
        <ToolButton icon="find" title="Procurar" />
        <ToolButton icon="refresh" title="Atualizar" />
        <ToolButton icon="down2" title="Expandir" />
        <ToolButton icon="up2" title="Comprimir" />
        <ToolButton icon="note" title="Nota" disabled />
        <Sep />
        <ToolButton icon="insert" text="Inserir seqüencialm." width="w-[136px]" disabled />
        <Sep />
        <ToolButton icon="remove" title="Remover" disabled />
        <Sep />
        <ToolButton icon="template" text="Carregar modelo itin.processo" width="w-[190px]" disabled />
        <ToolButton icon="template" text="Inserir mod.itin.proc." width="w-[142px]" disabled />
        <Sep />
        <ToolButton icon="link" title="Ligações" />
        <ToolButton icon="people" title="Agentes" />
        <Sep />
        <ToolButton icon="hat" title="Função" />
        <ToolButton icon="table" title="Tabela" />
        <ToolButton icon="scroll" title="Log" />
        <ToolButton icon="windowSave" title="Layout" />
      </div>
      <div className="h-1 bg-[#dde7ee]" />
      <div className="flex flex-1 flex-col overflow-hidden bg-[#edf4fc]">
        <StepsTable />
        <div className="w-[251px] flex-1 border-r border-[#9db0c0]" />
        <div className="flex h-[18px] bg-[#f8fbff]">
          <div className="w-[251px] shrink-0 border-r border-[#9db0c0]" />
          <Arrow dir="left" />
          <Arrow dir="right" />
          <div className="ml-0.5 flex w-[812px] shrink-0 items-center justify-center border border-[#9fb3c4] bg-linear-to-b from-[#e6eff5] to-[#cddde8]">
            <ThumbDots />
          </div>
        </div>
      </div>
    </main>
  );
}

function SapLogo() {
  return (
    <svg viewBox="0 0 38 19" className="h-[19px] w-[38px]" role="img" aria-label="SAP">
      <defs>
        <linearGradient id="sap" x1="0" y1="0" x2="0" y2="1">
          <stop offset="0" stopColor="#b4cce4" />
          <stop offset="1" stopColor="#7b9dc2" />
        </linearGradient>
      </defs>
      <path d="M0 0h38L20 19H0z" fill="url(#sap)" />
      <text x="1" y="14" fontSize="13" fontWeight="700" fontFamily="Liberation Sans, sans-serif" fill="#fff">
        SAP
      </text>
    </svg>
  );
}

const taskItems = [1, 2, 3, 4, 5, 6, 7, 8, 9, 10];

export default function App() {
  return (
    <div className="flex min-h-screen flex-col overflow-hidden bg-[#e8eff6] font-['DejaVu_Sans_Condensed','Noto_Sans',sans-serif] text-xs text-black">
      <div className="h-[3px]" />
      <header className="ml-[3px] border-t border-[#98a8b8]">
        <div className="flex h-[31px] items-center gap-[14px] border-b border-[#edf3f9] bg-linear-to-b from-[#d2e1ed] via-[#bfd1df] to-[#abc2de] pb-0.5 pl-[11px]">
          <ToolButton icon="session" title="Menu" width="w-10" menu />
          <h1 className="text-[17px] font-bold whitespace-nowrap italic">Caso Exibir: AC02262016 (Alteração Contratual)</h1>
        </div>
        <div className="flex h-[33px] items-center gap-1.5 border-b border-[#a3b3c0] bg-[#cfdce7] pb-[3px] pl-3">
          <button aria-label="Voltar"><Icon name="back" /></button>
          <Sep />
          <button aria-label="Nova janela"><Icon name="newWindow" /></button>
          <Sep />
          <button aria-label="Sobrepor"><Icon name="overlapGreen" /></button>
          <Sep />
          <button aria-label="Substituir"><Icon name="overlapYellow" /></button>
        </div>
      </header>
      <div className="flex flex-1">
        <Sidebar />
        <CasePanel />
      </div>
      <footer className="relative border-t border-[#d4dce6] bg-[#fdfdfd]">
        <div className="flex h-7 items-center pb-0.5 pl-[769px]">
          <SapLogo />
        </div>
        <div className="flex h-[3px] gap-px border-t border-[#7f8f9f] bg-[#20262e] pl-[383px]">
          {taskItems.map((n) => (
            <span key={n} className="w-[45px] rounded-t-sm bg-[#b4b8bc]" />
          ))}
        </div>
        <svg viewBox="0 0 32 8" className="absolute bottom-0 left-0 h-2 w-8" aria-hidden="true">
          <path d="M0 8C2 2 9 .5 15.500.5S29 2 31 8z" fill="#7ca3c4" stroke="#24506f" />
          <path d="M8 8c2-3 6-3 9-1v1z" fill="#b04a28" />
        </svg>
      </footer>
    </div>
  );
}
